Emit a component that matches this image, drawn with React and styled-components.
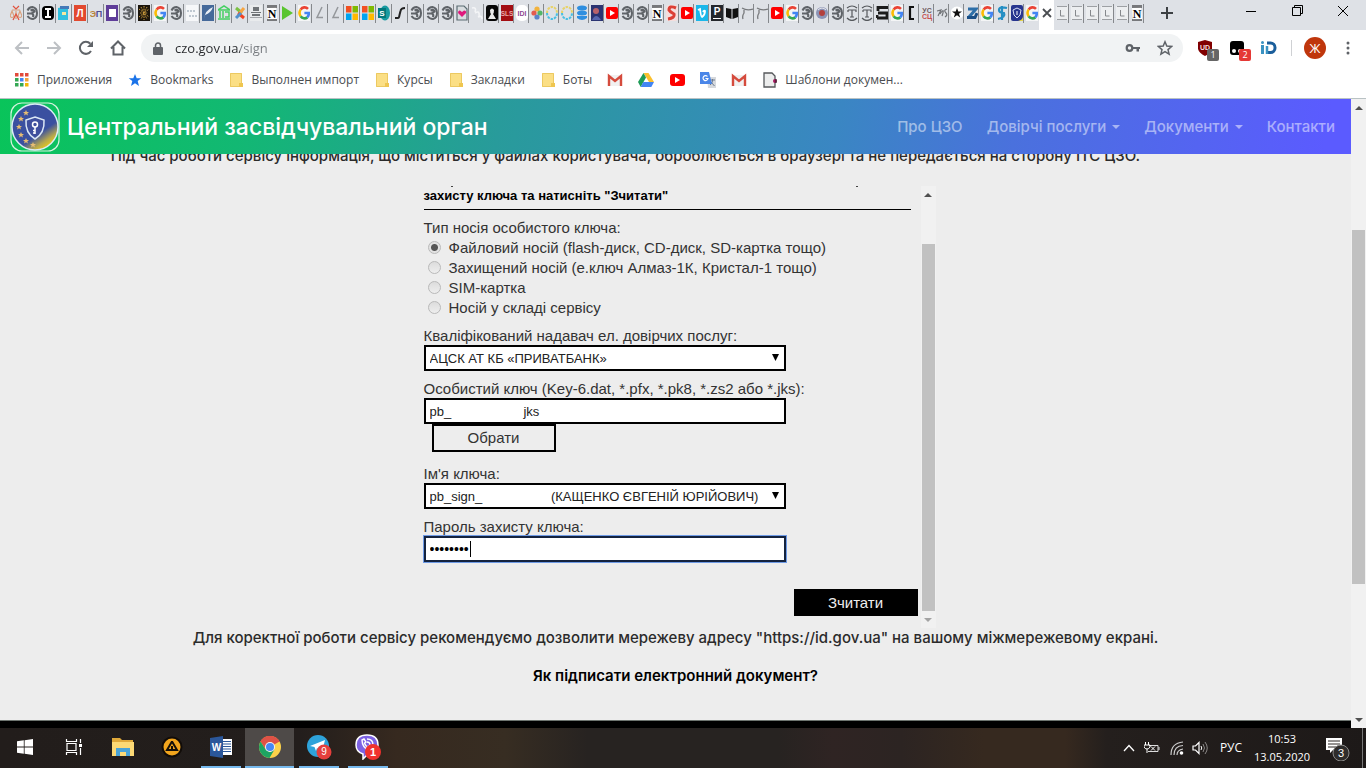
import React from "react";
import styled, { createGlobalStyle, css } from "styled-components";

const UI = `"Open Sans", "Noto Sans", sans-serif`;
const SITE = `Inter, "Liberation Sans", sans-serif`;
const FORM = `"Liberation Sans", Arial, sans-serif`;

const Global = createGlobalStyle`
  * { box-sizing: border-box; }
  body { margin: 0; background: #ededed; font-family: ${UI}; }
  button { font: inherit; border: 0; padding: 0; background: none; color: inherit; }
  svg { display: block; }
`;

const Desktop = styled.div`
  min-height: 100vh;
  display: flex;
  flex-direction: column;
`;

/* ---------- browser tab strip ---------- */
const TabStrip = styled.header`
  height: 30px;
  flex: none;
  display: flex;
  background: #dee1e6;
  padding-left: 8px;
  overflow: hidden;
`;
const Tab = styled.button`
  flex: none;
  width: ${(p) => p.$w}px;
  height: 30px;
  display: flex;
  align-items: center;
  justify-content: center;
  padding-bottom: 4px;
  background: linear-gradient(#85888c, #85888c) right 4px / 1px 19px no-repeat;
  ${(p) => p.$active && css`background: #fff; color: #444;`}
  ${(p) => p.$before && css`background: none; border-radius: 0 0 6px 0;`}
`;
const NewTab = styled.button`
  width: 45px;
  display: flex;
  align-items: center;
  justify-content: center;
  padding-bottom: 4px;
`;
const WindowButtons = styled.div`
  margin-left: auto;
  display: flex;
`;
const WindowButton = styled.button`
  width: 46px;
  height: 21px;
  display: flex;
  align-items: center;
  justify-content: center;
`;

/* ---------- toolbar ---------- */
const Toolbar = styled.div`
  height: 36px;
  flex: none;
  background: #fff;
  display: flex;
  align-items: center;
  padding: 0 10px 0 12px;
`;
const ToolButton = styled.button`
  width: 20px;
  height: 20px;
  margin-right: 12px;
  flex: none;
  display: flex;
  align-items: center;
  justify-content: center;
  position: relative;
`;
const Omnibox = styled.div`
  flex: 1;
  height: 28px;
  border-radius: 14px;
  background: #f1f3f4;
  display: flex;
  align-items: center;
  gap: 12px;
  padding: 0 10px 0 12px;
  margin: 0 12px 0 1px;
`;
const OmniboxActions = styled.div`
  display: flex;
  gap: 16px;
`;
const Url = styled.input`
  flex: 1;
  min-width: 0;
  border: 0;
  outline: 0;
  padding: 0;
  font: 13px ${UI};
  color: transparent;
  background: linear-gradient(to right, #27292c 65px, #777b80 65px);
  background-clip: text;
  -webkit-background-clip: text;
`;
const Badge = styled.span`
  position: absolute;
  left: 12px;
  top: 11px;
  width: 12px;
  height: 12px;
  border-radius: 2px;
  background: ${(p) => p.$bg};
  color: #fff;
  font: 9px/12px ${UI};
  text-align: center;
`;
const Divider = styled.i`
  width: 1px;
  height: 16px;
  background: #cfd1d4;
`;
const Avatar = styled.button`
  width: 22px;
  height: 22px;
  border-radius: 50%;
  background: #bf360c;
  color: #fff;
  font-size: 13px;
  line-height: 22px;
  margin: 0 14px 0 12px;
`;

/* ---------- bookmarks ---------- */
const Bookmarks = styled.nav`
  height: 33px;
  flex: none;
  background: #fff;
  display: flex;
  align-items: center;
  gap: 15px;
  padding: 0 0 4px 14px;
  border-bottom: 1px solid #b9c2c4;
`;
const Bookmark = styled.a`
  display: flex;
  align-items: center;
  gap: 7px;
  color: #4a4d51;
  font-size: 12px;
  line-height: 16px;
  text-decoration: none;
  white-space: nowrap;
`;

/* ---------- site ---------- */
const Viewport = styled.div`
  flex: 1;
  display: flex;
  background: #ededed;
`;
const Page = styled.div`
  flex: 1;
  min-width: 0;
  display: flex;
  flex-direction: column;
`;
const SiteHeader = styled.header`
  height: 55px;
  display: flex;
  align-items: center;
  justify-content: space-between;
  padding: 0 16px 0 10px;
  font-family: ${SITE};
  background: linear-gradient(100deg, #09c45a 0%, #12b873 18%, #289b9b 37%, #3a86c3 62%, #4a71dd 75%, #5b5bff 98%);
`;
const Brand = styled.a`
  display: flex;
  align-items: center;
  gap: 7px;
  color: #fff;
  text-decoration: none;
  font-size: 23px;
  line-height: 28px;
  font-weight: 500;
`;
const SiteNav = styled.nav`
  display: flex;
  gap: 24px;
`;
const NavLink = styled.a`
  display: flex;
  align-items: center;
  gap: 6px;
  color: rgba(255, 255, 255, 0.5);
  font-size: 15px;
  line-height: 20px;
  font-weight: 500;
  text-decoration: none;
`;
const Caret = styled.i`
  border: 4px solid transparent;
  border-top-color: currentColor;
  border-bottom: 0;
`;
const Notice = styled.p`
  margin: 0;
  font: 500 15px/20px ${SITE};
  color: #2b2b2b;
  text-align: center;
`;
const ScrolledNotice = styled.div`
  height: 12px;
  overflow: hidden;
  display: flex;
  flex-direction: column;
  justify-content: flex-end;
  padding-right: 100px;
`;
const HelpLink = styled.a`
  margin: 18px auto 0;
  font: 600 15px/20px ${SITE};
  color: #000;
  text-decoration: none;
`;
const SiteFooter = styled.footer`
  height: 8px;
  margin-top: auto;
  background: #000;
  border-top: 1px solid #6d746f;
`;

/* ---------- scroll bars ---------- */
const Bar = styled.div`
  width: 15px;
  flex: none;
  display: flex;
  flex-direction: column;
  align-items: center;
  background: #f1f1f1;
`;
const Arrow = styled.button`
  width: 15px;
  height: 17px;
  flex: none;
  display: flex;
  align-items: center;
  justify-content: center;
  color: ${(p) => p.$color || "#505050"};
`;
const Gap = styled.i`
  flex: ${(p) => p.$grow} 1 0;
`;
const Thumb = styled.i`
  width: 13px;
  flex: ${(p) => p.$grow} 1 0;
  background: #c1c1c1;
`;

/* ---------- key form ---------- */
const Frame = styled.section`
  width: 520px;
  max-width: 100%;
  margin: 20px auto 0;
  display: flex;
`;
const Form = styled.form`
  flex: 1;
  padding: 0 3px 12px 8px;
  display: flex;
  flex-direction: column;
  font: 15px/20px ${FORM};
  color: #333;
`;
const CutLine = styled.div`
  height: 1px;
  display: flex;
  justify-content: space-between;
  padding: 0 60px 0 27px;
  i { width: 2px; background: #444; }
`;
const FormTitle = styled.h2`
  margin: 0 7px 8px 0;
  padding-bottom: 4px;
  border-bottom: 1px solid #000;
  font: bold 13px/18px ${FORM};
  color: #000;
`;
const Choices = styled.fieldset`
  margin: 0 0 8px;
  padding: 0;
  border: 0;
  legend { padding: 0; }
`;
const Choice = styled.label`
  display: flex;
  align-items: center;
  gap: 8px;
  padding-left: 4px;
`;
const Radio = styled.input.attrs({ type: "radio", name: "carrier" })`
  appearance: none;
  width: 13px;
  height: 13px;
  margin: 0 0 2px;
  border: 1px solid #b9b9b9;
  border-radius: 50%;
  background: linear-gradient(#dcdcdc, #eee);
  &:checked { background: radial-gradient(circle, #555 0 3px, #e2e2e2 4px); }
`;
const Field = styled.div`
  display: flex;
  flex-direction: column;
  align-items: flex-start;
  margin-bottom: ${(p) => p.$after || 8}px;
  label { line-height: 19px; }
`;
const Control = styled.div`
  position: relative;
  width: 362px;
  height: 26px;
  svg { position: absolute; right: 7px; top: 9px; pointer-events: none; }
`;
const box = css`
  appearance: none;
  display: block;
  width: 100%;
  height: 26px;
  margin: 0;
  padding: 0 4px;
  border: 2px solid #000;
  border-radius: 0;
  background: #fff;
  color: #222;
  font: 13px ${FORM};
`;
const Select = styled.select`${box}`;
const TextBox = styled.input`
  ${box}
  ${(p) => p.$focused && css`
    font-size: 14px;
    color: #000;
    border-color: #14233f;
    outline: 1px solid #6f9be6;
  `}
`;
const TextCursor = styled.i`
  position: absolute;
  left: 46px;
  top: 5px;
  width: 1px;
  height: 16px;
  background: #000;
`;
const PickButton = styled.button`
  width: 124px;
  height: 28px;
  margin-left: 8px;
  border: 2px solid #000;
  text-align: center;
`;
const ReadButton = styled.button`
  width: 124px;
  height: 27px;
  margin-top: 19px;
  align-self: flex-end;
  background: #000;
  color: #eee;
`;

/* ---------- task bar ---------- */
const Taskbar = styled.footer`
  height: 40px;
  flex: none;
  display: flex;
  background: linear-gradient(to right, #221d1b 0, #231e1c 22%, #36291f 29%, #372d22 37%, #272321 43%, #272321 57%, #2f2423 61%, #2c2422 66%, #36291f 72%, #36291f 78%, #241f1d 81%, #1d1918 100%);
  color: #fff;
`;
const Task = styled.button`
  width: 49px;
  height: 40px;
  flex: none;
  display: flex;
  align-items: center;
  justify-content: center;
  border-bottom: 2px solid transparent;
  ${(p) => p.$open && css`
    background: linear-gradient(#76b9ed, #76b9ed) center bottom / 40px 2px no-repeat border-box;
  `}
  ${(p) => p.$current && css`
    background: #4e4a48;
    border-bottom-color: #76b9ed;
  `}
`;
const Tray = styled.div`
  margin-left: auto;
  display: flex;
  align-items: center;
`;
const TrayButton = styled.button`
  width: ${(p) => p.$w}px;
  height: 40px;
  display: flex;
  align-items: center;
  justify-content: center;
  font: ${(p) => p.$size || 12}px/18px ${UI};
`;
const ShowDesktop = styled.button`
  width: 4px;
  height: 40px;
  border-left: 1px solid #777;
`;

/* ---------- drawings ---------- */
const GShapes = () => (
  <g fill="none" strokeWidth="2.6">
    <path d="M2.6 4.6A5 5.6 0 0 1 10 3.8" stroke="#ea4335" />
    <path d="M2.6 4.6A6 6 0 0 0 2.6 11.2" stroke="#fbbc05" />
    <path d="M2.6 11.2A5 5.6 0 0 0 9.4 12.4" stroke="#34a853" />
    <path d="M6.4 8H10.8A6 6 0 0 1 9.2 12.4" stroke="#4285f4" />
  </g>
);
const T = ({ x = 6, y = 12, s = 10, c = "#fff", w = 700, f = "Liberation Sans", children }) => (
  <text x={x} y={y} fontSize={s} fill={c} fontWeight={w} fontFamily={f} textAnchor="middle">{children}</text>
);
const icons = {
  scales: <g fill="none" strokeWidth="1.2"><path d="M6 6V14M2 5L10 5M0 11Q2 14 4 11L2 6ZM8 11Q10 14 12 11L10 6Z" stroke="#d9a07c" /><path d="M3 1L6 4L9 1M3 15L6 9L9 15" stroke="#e0523e" /></g>,
  globe: <g stroke="#5f6368" fill="none"><path d="M1.500 5.500Q3 2 6.500 2Q11 3 11 8Q11 13 7 14Q3.500 14 1.500 11" strokeWidth="2" /><path d="M1 8.500H5.500Q8 9 7 12M4.500 5.500Q8 4 8.500 6.500L6 8" strokeWidth="2.200" /></g>,
  eye: <g><rect y="1" width="12" height="14" rx="4" fill="#000" /><path d="M3 4H9M6 4V12M3 12H9" stroke="#fff" strokeWidth="2" /></g>,
  book: <g><path d="M0 3L10 1V15H0Z" fill="#31c0e0" /><path d="M2 1H11V4H2Z" fill="#4579b8" /><rect x="4" y="7" width="4" height="3" fill="#f5e9a0" /></g>,
  el: <g><rect y="0" width="12" height="16" fill="#e2492f" /><T>Л</T></g>,
  ep: <g><T x={3} s={9} c="#b8863c">Э</T><T x={9} s={9} c="#4d4b92">П</T></g>,
  purple: <g><rect width="12" height="16" fill="#5f3d99" /><rect x="3" y="4" width="7" height="8" fill="#fff" /></g>,
  lace: <g><rect width="12" height="16" fill="#1a140c" /><path d="M6 1V15M1 4L11 12M1 12L11 4M2 8H10M3 2L9 14M9 2L3 14" stroke="#c99a3d" strokeWidth="1" strokeDasharray="1.6 1" /></g>,
  g: <g><rect width="12" height="16" fill="#f4f5f6" /><GShapes /></g>,
  sheet: <g><rect y="0" width="12" height="16" fill="#f6f7f9" /><path d="M1 6H10M3 11H11" stroke="#8899aa" strokeWidth="1.2" strokeDasharray="2 1" /></g>,
  feather: <g><rect width="12" height="16" fill="#45699a" /><path d="M2 14Q3 5 11 2Q9 8 3 10" fill="#e9eef5" /></g>,
  bank: <g stroke="#45cf62" strokeWidth="1.5" fill="none"><path d="M0 5L6 1L12 5ZM0 14H12M2 6V13M5 6V13M7 7H11V12H7" /></g>,
  joomla: <g fill="none" strokeWidth="3"><path d="M2 3L8 8" stroke="#7ac143" /><path d="M10 3L5 9" stroke="#f9a541" /><path d="M10 13L4 8" stroke="#f44321" /><path d="M2 13L7 8" stroke="#5091cd" /></g>,
  agent: <g><rect width="12" height="16" fill="#e9ebed" /><g fill="#6f7377"><path d="M3 2H9V6H3Z" /><path d="M1 7H11V8H1ZM2 9H10V11H2Z" /><path d="M0 12H12V13H0Z" fill="#a3a6aa" /></g></g>,
  notion: <g><path d="M1 3L10 2L11 14L2 15Z" fill="#fff" /><path d="M1 2H11M1 15H11M1 0H11" stroke="#111" strokeWidth="1.2" /><T y={12.5} s={12} c="#000" f="Liberation Serif">N</T></g>,
  play: <path d="M0 1L11 8L0 15Z" fill="#5ac52f" />,
  hook: <path d="M8 2L3 12.500H9" stroke="#94979b" strokeWidth="1.500" fill="none" />,
  ms: <g><path d="M0 1H5.5V7.5H0Z" fill="#f25022" /><path d="M6.5 1H12V7.5H6.5Z" fill="#7fba00" /><path d="M0 8.5H5.5V15H0Z" fill="#00a4ef" /><path d="M6.5 8.5H12V15H6.5Z" fill="#ffb900" /></g>,
  sp: <g><ellipse cx="7" cy="8" rx="5" ry="7.5" fill="#1a9ba1" /><rect y="3" width="8" height="10" fill="#03787c" /><T x={4} y={11} s={8}>S</T></g>,
  curve: <path d="M1 13H4Q5 13 5.500 10L6.500 6Q7 3 11 3" stroke="#222" strokeWidth="2" fill="none" />,
  heart: <g><path d="M1 1H8L11 4V15H1Z" fill="#d9dde0" stroke="#5b6c72" strokeWidth="1.2" /><path d="M6 12L2 8Q2 5 4 5.500L6 7L8 5.500Q11 6 10 8Z" fill="#e0187c" /></g>,
  faint: <path d="M1 3Q6 2 4 7M4 8Q9 5 8 11M7 12Q11 10 11 14" stroke="#f4f5f7" strokeWidth="1.6" fill="none" />,
  figure: <g><rect width="12" height="16" rx="3" fill="#050505" /><path d="M4 5Q6 2 8 5Q8 8 7 9L10 14H2L5 9Q4 8 4 5Z" fill="#e9e9e9" /></g>,
  sls: <g><rect width="12" height="16" fill="#a30d12" /><T y={11} s={6.500} c="#e8a9a9">SLS</T></g>,
  iui: <g><rect width="12" height="16" rx="5" fill="#fff" /><T y={11} s={7} c="#8d4a94">IDI</T></g>,
  plus: <g><circle cx="6" cy="4" r="2.600" fill="#f2b33d" /><circle cx="3" cy="8" r="2.600" fill="#e35b50" /><circle cx="9" cy="8" r="2.600" fill="#53b668" /><circle cx="6" cy="12" r="2.600" fill="#5a83c9" /></g>,
  ring: <g fill="none" strokeWidth="2" strokeDasharray="2.500 1"><path d="M1 8A5 6 0 0 1 11 8" stroke="#e8d267" /><path d="M1 8A5 6 0 0 0 11 8" stroke="#48bfe3" /></g>,
  stack: <g fill="#2f8fe0"><ellipse cx="6" cy="3" rx="5" ry="2.500" /><ellipse cx="6" cy="8" rx="5" ry="2.500" /><path d="M1 11H11V13Q6 17 1 13Z" /></g>,
  person: <g><rect width="12" height="16" fill="#2b3472" /><circle cx="5" cy="6" r="3" fill="#b8636b" /><path d="M1 15Q5 7 10 15" fill="#5868b0" /></g>,
  yt: <g><rect y="2" width="12" height="12" rx="2" fill="#f00" /><path d="M4 5L9 8L4 11Z" fill="#fff" /></g>,
  es: <g><rect width="12" height="16" rx="3" fill="#f4dedd" /><path d="M10 3Q3 0 3 5Q4 7 8 9Q9 13 2 14" stroke="#dc3f35" strokeWidth="3" fill="none" /></g>,
  vimeo: <g><rect width="12" height="16" fill="#1ab7ea" /><path d="M2 5L4 4Q5 12 6 12Q9 10 9 6Q8 5 7 7" stroke="#fff" strokeWidth="1.800" fill="none" /></g>,
  pee: <g><rect width="12" height="16" fill="#24272c" /><T y={10} s={10}>P</T><path d="M2 13.500H10" stroke="#fff" /></g>,
  black: <g fill="#111"><path d="M0 3L5.500 4V14L0 12Z" /><path d="M12 3L6.500 4V14L12 12Z" /></g>,
  pen: <path d="M1 3Q6 6 12 4M3 5V8Q1 11 2 14" stroke="#77797c" strokeWidth="1.300" fill="none" />,
  ball: <g><circle cx="6" cy="8" r="6" fill="#8b93b5" /><circle cx="6" cy="8" r="3" fill="#b3403d" /><path d="M2 5Q6 1 10 5" stroke="#eee" fill="none" /></g>,
  tee: <g fill="none" stroke="#55585c" strokeWidth="1.200"><path d="M1 3Q6 -1 11 3M1 13Q6 18 11 13M2 5H10V7M6 5V12M4 12H8M2 5V7" /></g>,
  gee: <path d="M12 2.500H2V6M2 8H11V13H1M1 10V13" stroke="#1b1b1b" strokeWidth="2.800" fill="none" />,
  bracket: <path d="M8 2H4V14H8" stroke="#111" strokeWidth="2.200" fill="none" />,
  us: <g><T y={7.500} s={7} c="#6e5960">УС</T><T y={14} s={7} c="#c95050">СЦ</T></g>,
  squig: <path d="M1 6L5 5L2 11M4 9Q8 3 7 8L6 11M11 4Q7 5 10 8Q12 10 9 12" stroke="#707377" strokeWidth="1.200" fill="none" />,
  star: <g><circle cx="6" cy="8" r="6.500" fill="#fff" /><path d="M6 3L7.300 6.500H11L8 8.800L9.200 12.500L6 10.200L2.800 12.500L4 8.800L1 6.500H4.700Z" fill="#111" /></g>,
  zed: <g fill="none" strokeWidth="3"><path d="M2 4H10L3 12" stroke="#2e6fa8" /><path d="M1 12.500H9L11 8" stroke="#1b4f86" /></g>,
  teal: <path d="M11 3Q3 1 3 5Q3 8 8 8Q10 12 2 14M6 1V15" stroke="#258fc4" strokeWidth="2.200" fill="none" />,
  shield: <g><rect width="12" height="16" rx="2" fill="#27358f" /><path d="M6 3L10 5Q10 11 6 13Q2 11 2 5Z" fill="none" stroke="#d9dff5" /><path d="M6 6V10" stroke="#fff" /><path d="M7 16Q12 15 12 11V16Z" fill="#e8d648" /></g>,
  cross: <path d="M2 4L10 12M10 4L2 12" stroke="#4a4d51" strokeWidth="1.800" />,
  ell: <g><rect x="0" y="1" width="12" height="14" fill="#eceef0" /><path d="M1 1.500H11M1 14.500H11" stroke="#9da0a4" /><path d="M4.500 5V11H8.500" stroke="#85888c" fill="none" /></g>,
};
const order = (
  "scales globe eye book el ep purple globe lace g globe sheet feather bank joomla agent notion play g hook hook ms ms sp curve globe " +
  "globe globe heart faint figure sls iui plus ring ring stack person yt globe globe notion es yt vimeo pee black pen pen yt g globe ball globe " +
  "tee tee gee g bracket us squig star zed g teal shield g cross ell ell ell ell ell notion"
).split(" ");
const activeTab = order.indexOf("cross");

const Line = ({ d, size = 16, color = "#5f6368", w = 2, fill = "none" }) => (
  <svg width={size} height={size} viewBox="0 0 16 16" aria-hidden="true">
    <path d={d} stroke={color} strokeWidth={w} fill={fill} />
  </svg>
);
const Svg = ({ w = 16, h = 16, box, children }) => (
  <svg width={w} height={h} viewBox={box || `0 0 ${w} ${h}`} aria-hidden="true">{children}</svg>
);
const Folder = () => (
  <Svg><path d="M2 1H14V15H2Z" fill="#fbdf85" /><path d="M2.500 1.500H13.500V14.500H2.500Z" fill="none" stroke="#ecc961" /><path d="M11 11H15V15H11Z" fill="#efc650" /></Svg>
);
const Gmail = () => (
  <Svg><path d="M1 3H15V14H1Z" fill="#f1f1f1" /><path d="M2 14V4L8 9L14 4V14" stroke="#d54b3d" strokeWidth="2.400" fill="none" /></Svg>
);
const Tri = ({ up }) => (
  <Svg w={8} h={4}><path d={up ? "M0 4L4 0L8 4Z" : "M0 0L4 4L8 0Z"} fill="currentColor" /></Svg>
);
const SelectArrow = () => (
  <Svg w={7} h={7}><path d="M0 0H7L3.500 7Z" fill="#000" /></Svg>
);

const bookmarks = [
  ["Приложения", <Svg>{["#e24a3b", "#e24a3b", "#e24a3b", "#35a853", "#4285f4", "#f2a33c", "#35a853", "#35a853", "#f2b705"].map((c, i) => <rect key={i} x={1 + (i % 3) * 5} y={1 + Math.floor(i / 3) * 5} width="3.500" height="3.500" fill={c} />)}</Svg>],
  ["Bookmarks", <Svg><path d="M8 2L9.700 6.300H14.300L10.700 9.100L12 14L8 11.200L4 14L5.300 9.100L1.700 6.300H6.300Z" fill="#1a73e8" /></Svg>],
  ["Выполнен импорт", <Folder />],
  ["Курсы", <Folder />],
  ["Закладки", <Folder />],
  ["Боты", <Folder />],
  ["", <Gmail />],
  ["", <Svg><path d="M5.500 1H10.500L16 10H11Z" fill="#fbc02d" /><path d="M5.500 1L8 5.500L2.700 15L0 10Z" fill="#1e9c57" /><path d="M5.300 10H16L13.300 15H2.700Z" fill="#4285f4" /></Svg>],
  ["", <Svg><rect x="1" y="2" width="15" height="12" rx="3" fill="#f00" /><path d="M6 5L11 8L6 11Z" fill="#fff" /></Svg>],
  ["", <Svg><path d="M7 5H16V16H8Z" fill="#d6d9dd" /><path d="M10 8H15M12.500 7V9Q12 12 10 13M11 10L14.500 14" stroke="#6b7a90" fill="none" /><path d="M0 0H9L12 12H0Z" fill="#4a86e8" /><path d="M7.500 4.500A2.500 2.500 0 1 0 8 6.500H5.500" stroke="#fff" strokeWidth="1.200" fill="none" /></Svg>],
  ["", <Gmail />],
  ["Шаблони докумен...", <Svg><path d="M2 1H10L13 4V15H2Z" fill="#eceded" stroke="#55585b" strokeWidth="1.300" /><circle cx="13" cy="9" r="2" fill="#a3175e" /><path d="M14 7V11" stroke="#222" /></Svg>],
];

function Browser() {
  return (
    <>
      <TabStrip>
        {order.map((name, i) => (
          <Tab key={i} $w={i < 26 ? 16 : 15} $active={i === activeTab} $before={i === activeTab - 1} aria-label={`Вкладка ${i + 1}`}>
            <Svg w={12} h={16}>{icons[name]}</Svg>
          </Tab>
        ))}
        <NewTab aria-label="Новая вкладка"><Line d="M8 2V14M2 8H14" color="#3c4043" /></NewTab>
        <WindowButtons>
          <WindowButton aria-label="Свернуть"><Svg w={10} h={10}><path d="M0 5.500H10" stroke="#000" /></Svg></WindowButton>
          <WindowButton aria-label="Окно"><Svg w={11} h={11}><path d="M0.500 2.500H8.500V10.500H0.500ZM2.500 2.500V0.500H10.500V8.500H8.500" stroke="#000" fill="none" /></Svg></WindowButton>
          <WindowButton aria-label="Закрыть"><Svg w={10} h={10}><path d="M0 0L10 10M10 0L0 10" stroke="#000" /></Svg></WindowButton>
        </WindowButtons>
      </TabStrip>
      <Toolbar>
        <ToolButton aria-label="Назад"><Line d="M15 8H2M8 2L2 8L8 14" color="#bdc0c4" /></ToolButton>
        <ToolButton aria-label="Вперед"><Line d="M1 8H14M8 2L14 8L8 14" color="#bdc0c4" /></ToolButton>
        <ToolButton aria-label="Обновить"><Svg><path d="M13 11A6 6 0 1 1 12.300 3.800" stroke="#5f6368" strokeWidth="2" fill="none" /><path d="M15 1V7H9Z" fill="#5f6368" /></Svg></ToolButton>
        <ToolButton aria-label="Домой"><Svg><path d="M1 8.500L8 1.500L15 8.500M3.500 7V14.500H12.500V7" stroke="#5f6368" strokeWidth="2" fill="none" /></Svg></ToolButton>
        <Omnibox>
          <Svg w={10} h={13}><rect y="5" width="10" height="8" rx="1" fill="#5f6368" /><path d="M2.500 6V3.500A2.500 2.500 0 0 1 7.500 3.500V6" stroke="#5f6368" strokeWidth="1.500" fill="none" /></Svg>
          <Url aria-label="Адрес" defaultValue="czo.gov.ua/sign" />
          <OmniboxActions>
            <Svg><path d="M8 7H15V9H14V11.500H11.500V9H8Z" fill="#5f6368" /><circle cx="4.500" cy="8" r="2.800" stroke="#5f6368" strokeWidth="2.200" fill="none" /></Svg>
            <Svg><path d="M8 1.800L9.800 6.100L14.600 6.500L11 9.600L12.100 14.200L8 11.700L3.900 14.200L5 9.600L1.400 6.500L6.200 6.100Z" stroke="#5f6368" strokeWidth="1.500" fill="none" /></Svg>
          </OmniboxActions>
        </Omnibox>
        <ToolButton aria-label="uBlock"><Svg><path d="M8 0L15 2V9Q14 13 8 16Q2 13 1 9V2Z" fill="#800000" /><T x={8} y={10} s={7} c="#f3dede">UD</T></Svg><Badge $bg="#666">1</Badge></ToolButton>
        <ToolButton aria-label="Расширение"><Svg><rect x="1" y="1" width="14" height="14" rx="3" fill="#000" /><circle cx="5" cy="11" r="2" fill="#fff" /><circle cx="11" cy="11" r="2" fill="#fff" /></Svg><Badge $bg="#e53935">2</Badge></ToolButton>
        <ToolButton aria-label="iD"><Svg><rect y="5" width="3" height="9" fill="#3a92c2" /><circle cx="1.500" cy="2.500" r="1.500" fill="#3a92c2" /><path d="M6 3H9.500A4.500 4.700 0 0 1 9.500 12.500H6" stroke="#1b5e9b" strokeWidth="3" fill="none" /><path d="M6 6V14" stroke="#3a92c2" strokeWidth="2.500" /></Svg></ToolButton>
        <Divider />
        <Avatar aria-label="Профиль">Ж</Avatar>
        <Svg w={16} h={16}><g fill="#5f6368"><circle cx="8" cy="3" r="1.500" /><circle cx="8" cy="8" r="1.500" /><circle cx="8" cy="13" r="1.500" /></g></Svg>
      </Toolbar>
      <Bookmarks aria-label="Закладки">
        {bookmarks.map(([label, icon], i) => (
          <Bookmark key={i} href="#">{icon}{label && <span>{label}</span>}</Bookmark>
        ))}
      </Bookmarks>
    </>
  );
}

const Emblem = () => (
  <Svg w={50} h={50}>
    <rect x="1" y="1" width="48" height="48" rx="11" fill="none" stroke="#d5f3df" strokeWidth="1.200" />
    <defs>
      <linearGradient id="seal" x1="0.200" y1="0.200" x2="0.750" y2="1">
        <stop offset="0.600" stopColor="#3a50a0" /><stop offset="0.820" stopColor="#b9a94b" /><stop offset="1" stopColor="#f6d40c" />
      </linearGradient>
    </defs>
    <circle cx="25" cy="25" r="23" fill="url(#seal)" stroke="#dcebf5" strokeWidth="1.500" />
    {[[16, 11], [11, 17], [9, 25], [11, 33], [16, 39], [23, 43]].map(([x, y]) => (
      <path key={x + "-" + y} transform={`translate(${x} ${y})`} d="M0-3L0.900-1H3L1.300 0.400L2 2.600L0 1.300L-2 2.600L-1.300 0.400L-3-1H-0.900Z" fill="#e7bd72" />
    ))}
    <path d="M25 15L34 18Q35 31 25 37Q15 31 16 18Z" fill="#3f4f9d" stroke="#dbe7f5" strokeWidth="1.500" />
    <circle cx="25" cy="22.500" r="2.500" fill="none" stroke="#fff" strokeWidth="1.500" />
    <path d="M25 25V32M25 31H23M25 28.500H23" stroke="#fff" strokeWidth="1.500" />
  </Svg>
);

const space = (n) => "\u00a0".repeat(n);

function KeyForm() {
  return (
    <Frame>
      <Form onSubmit={(e) => e.preventDefault()}>
        <CutLine><i /><i /></CutLine>
        <FormTitle>захисту ключа та натисніть "Зчитати"</FormTitle>
        <Choices>
          <legend>Тип носія особистого ключа:</legend>
          <Choice><Radio defaultChecked />Файловий носій (flash-диск, CD-диск, SD-картка тощо)</Choice>
          <Choice><Radio />Захищений носій (е.ключ Алмаз-1К, Кристал-1 тощо)</Choice>
          <Choice><Radio />SIM-картка</Choice>
          <Choice><Radio />Носій у складі сервісу</Choice>
        </Choices>
        <Field>
          <label htmlFor="provider">Кваліфікований надавач ел. довірчих послуг:</label>
          <Control><Select id="provider"><option>АЦСК АТ КБ «ПРИВАТБАНК»</option></Select><SelectArrow /></Control>
        </Field>
        <Field $after={12}>
          <label htmlFor="keyfile">Особистий ключ (Key-6.dat, *.pfx, *.pk8, *.zs2 або *.jks):</label>
          <Control><TextBox id="keyfile" defaultValue={`pb_${space(20)}jks`} /></Control>
          <PickButton type="button">Обрати</PickButton>
        </Field>
        <Field>
          <label htmlFor="keyname">Ім'я ключа:</label>
          <Control><Select id="keyname"><option>{`pb_sign_${space(19)}(КАЩЕНКО ЄВГЕНІЙ ЮРІЙОВИЧ)`}</option></Select><SelectArrow /></Control>
        </Field>
        <Field>
          <label htmlFor="password">Пароль захисту ключа:</label>
          <Control><TextBox id="password" type="password" defaultValue="12345678" $focused /><TextCursor /></Control>
        </Field>
        <ReadButton>Зчитати</ReadButton>
      </Form>
      <Bar>
        <Arrow aria-label="Вгору"><Tri up /></Arrow>
        <Gap $grow={41} />
        <Thumb $grow={367} />
        <Arrow aria-label="Вниз" $color="#a3a3a3"><Tri /></Arrow>
      </Bar>
    </Frame>
  );
}

function Site() {
  return (
    <Viewport>
      <Page>
        <SiteHeader>
          <Brand href="#"><Emblem />Центральний засвідчувальний орган</Brand>
          <SiteNav>
            <NavLink href="#">Про ЦЗО</NavLink>
            <NavLink href="#">Довірчі послуги<Caret /></NavLink>
            <NavLink href="#">Документи<Caret /></NavLink>
            <NavLink href="#">Контакти</NavLink>
          </SiteNav>
        </SiteHeader>
        <ScrolledNotice>
          <Notice>Під час роботи сервісу інформація, що міститься у файлах користувача, оброблюється в браузері та не передається на сторону ІТС ЦЗО.</Notice>
        </ScrolledNotice>
        <KeyForm />
        <Notice>Для коректної роботи сервісу рекомендуємо дозволити мережеву адресу "https://id.gov.ua" на вашому міжмережевому екрані.</Notice>
        <HelpLink href="#">Як підписати електронний документ?</HelpLink>
        <SiteFooter />
      </Page>
      <Bar>
        <Arrow aria-label="Вгору"><Tri up /></Arrow>
        <Gap $grow={114} />
        <Thumb $grow={354} />
        <Gap $grow={127} />
        <Arrow aria-label="Вниз"><Tri /></Arrow>
      </Bar>
    </Viewport>
  );
}

function TaskbarView() {
  return (
    <Taskbar>
      <Task aria-label="Пуск"><Svg><path d="M0 2.300L6.800 1.300V7.600H0ZM7.600 1.200L16 0V7.600H7.600ZM0 8.400H6.800V14.700L0 13.700ZM7.600 8.400H16V16L7.600 14.800Z" fill="#fff" /></Svg></Task>
      <Task aria-label="Представление задач"><Svg w={18} h={16}><path d="M2 4.500H11V11.500H2ZM1.500 0V2.500H11.500V0M1.500 16V13.500H11.500V16M15.500 0V4M15.500 9V16" stroke="#fff" fill="none" strokeWidth="1.200" /><rect x="14" y="5" width="3" height="3" fill="#fff" /></Svg></Task>
      <Task aria-label="Проводник"><Svg w={22} h={18}><path d="M0 0H8L10 2H21V17H0Z" fill="#e0a93a" /><path d="M0 4H22V18H0Z" fill="#fcd975" /><path d="M4 18V10H18V18H14V14H8V18Z" fill="#4aa3d6" /></Svg></Task>
      <Task aria-label="AIMP"><Svg w={22} h={22}><circle cx="11" cy="11" r="10.500" fill="#110c08" /><circle cx="11" cy="11" r="8.500" fill="#f2a51d" /><path d="M11 5.500L6 14H16L11 5.500M11 10V14" stroke="#15100a" strokeWidth="2" fill="none" /></Svg></Task>
      <Task $open aria-label="Word"><Svg w={22} h={22}><rect x="11" y="3" width="11" height="16" fill="#fff" /><path d="M13 5.500H21M13 8H21M13 10.500H21M13 13H21M13 15.500H21" stroke="#2b579a" strokeWidth="1.200" /><path d="M0 2L13 0V22L0 20Z" fill="#2b579a" /><T x={6.500} y={15} s={10}>W</T></Svg></Task>
      <Task $open $current aria-label="Chrome"><Svg w={22} h={22}><circle cx="11" cy="11" r="11" fill="#fdd24a" /><path d="M11 11L1.500 5.500A11 11 0 0 1 20.500 5.500Z" fill="#de5246" /><path d="M11 6H20.800A11 11 0 0 0 1.500 5.500L6.700 13.500Z" fill="#de5246" /><path d="M1.500 5.500A11 11 0 0 0 10.500 22L15.500 13.500L11 16L6.700 13.500Z" fill="#1da462" /><circle cx="11" cy="11" r="5" fill="#f3f3f3" /><circle cx="11" cy="11" r="4" fill="#4688f4" /></Svg></Task>
      <Task $open aria-label="Telegram"><Svg w={26} h={26}><circle cx="12" cy="12" r="11" fill="#2ea3da" /><path d="M4 12L19 6L16 18L11 14L10 17L8.500 13Z" fill="#fff" /><circle cx="18" cy="18" r="7.500" fill="#e53f3c" /><T x={18} y={21} s={10} w={400}>9</T></Svg></Task>
      <Task $open aria-label="Viber"><Svg w={26} h={26}><path d="M12 1Q23 1 23 11Q23 21 12 21L8 25V20Q1 18 1 11Q1 1 12 1Z" fill="#7d62e3" stroke="#fff" strokeWidth="1.500" /><path d="M7 6Q7 14 15 17L17 14L14 12L12 13Q10 11 9.500 9L11 8L9 5ZM12 5Q18 5 18 11M12 8Q15 8 15 11" fill="none" stroke="#fff" strokeWidth="1.400" /><circle cx="18" cy="18" r="8" fill="#f0322e" /><T x={18} y={22} s={11}>1</T></Svg></Task>
      <Tray>
        <TrayButton $w={23} aria-label="Скрытые значки"><Svg w={12} h={8}><path d="M1 7L6 1.500L11 7" stroke="#fff" strokeWidth="1.300" fill="none" /></Svg></TrayButton>
        <TrayButton $w={24} aria-label="Батарея"><Svg w={16} h={12}><path d="M5 3.500H14V9.500H4M15 5V8" stroke="#ddd" fill="none" /><path d="M1.500 0V3M4.500 0V3M0 3H6V5Q5 7 3 7Q1 7 0 5ZM3 7V11M7 4.500L11 8.500M11 4.500L7 8.500" stroke="#fff" fill="none" /></Svg></TrayButton>
        <TrayButton $w={26} aria-label="Сеть"><Svg w={14} h={14}><path d="M1 14Q1 2 13 1M4 14Q4 5 13 4.500M7 14Q7 9 13 8" stroke="#ccc" strokeWidth="1.200" fill="none" /><circle cx="11.500" cy="12" r="1.800" fill="#fff" /></Svg></TrayButton>
        <TrayButton $w={20} aria-label="Громкость"><Svg w={17} h={14}><path d="M1 5H3.500L7 1.500V12.500L3.500 9H1Z" stroke="#fff" strokeWidth="1.200" fill="none" /><path d="M9 5Q10.500 7 9 9" stroke="#fff" fill="none" /><path d="M11 3Q14 7 11 11M13 1Q17.500 7 13 13" stroke="#8a8786" fill="none" /></Svg></TrayButton>
        <TrayButton $w={42}>РУС</TrayButton>
        <TrayButton $w={60} $size={11}>10:53<br />13.05.2020</TrayButton>
        <TrayButton $w={50} aria-label="Уведомления"><Svg w={26} h={26}><path d="M2 3H18V15H9L6 18V15H2Z" fill="#fff" /><path d="M4 6H16M4 9H16M4 12H13" stroke="#2a2725" /><circle cx="17" cy="18" r="8" fill="#2e2c2b" stroke="#8b8a89" /><T x={17} y={22} s={11} w={400}>3</T></Svg></TrayButton>
        <ShowDesktop aria-label="Показать рабочий стол" />
      </Tray>
    </Taskbar>
  );
}

export default function App() {
  return (
    <Desktop>
      <Global />
      <Browser />
      <Site />
      <TaskbarView />
    </Desktop>
  );
}
